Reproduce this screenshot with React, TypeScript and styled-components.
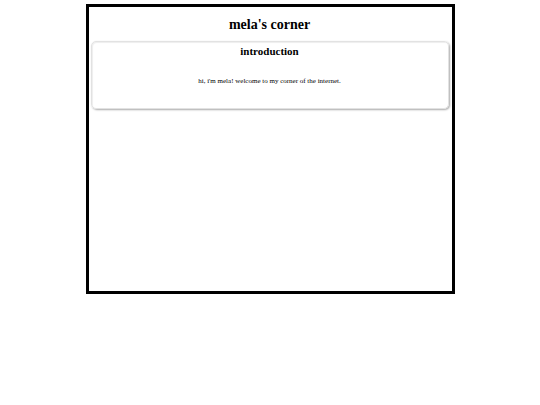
import React from "react";
import styled, { createGlobalStyle } from "styled-components";

const serif = `"Liberation Serif", "Times New Roman", Times, "DejaVu Serif", serif`;

const GlobalStyle = createGlobalStyle`
  html, body {
    margin: 0;
    padding: 0;
    background: #fff;
    font-family: ${serif};
    color: #000;
  }
`;

const Frame = styled.main`
  box-sizing: border-box;
  width: 369px;
  height: 290px;
  margin: 4px auto 0;
  border: 3px solid #000;
  padding: 0 3px 0 2px;
  font-family: ${serif};
`;

const Title = styled.h1`
  margin: 0;
  padding-top: 9px;
  height: 34px;
  box-sizing: border-box;
  font-family: ${serif};
  font-size: 14px;
  font-weight: bold;
  text-align: center;
  line-height: 18px;
`;

const Card = styled.section`
  box-sizing: border-box;
  height: 68px;
  border: 1px solid #e2e2e2;
  border-radius: 5px;
  box-shadow: inset 1px 1px 1px #eee, 1px 1px 2px #aaa;
  text-align: center;
`;

const CardTitle = styled.h2`
  margin: 0;
  padding-top: 2px;
  font-family: ${serif};
  font-size: 11px;
  font-weight: bold;
  line-height: 14px;
`;

const CardText = styled.p`
  margin: 19px 0 0;
  font-family: ${serif};
  font-size: 7px;
  line-height: 9px;
`;

export default function App() {
  return (
    <>
      <GlobalStyle />
      <Frame>
        <Title>mela's corner</Title>
        <Card>
          <CardTitle>introduction</CardTitle>
          <CardText>hi, i'm mela! welcome to my corner of the internet.</CardText>
        </Card>
      </Frame>
    </>
  );
}
